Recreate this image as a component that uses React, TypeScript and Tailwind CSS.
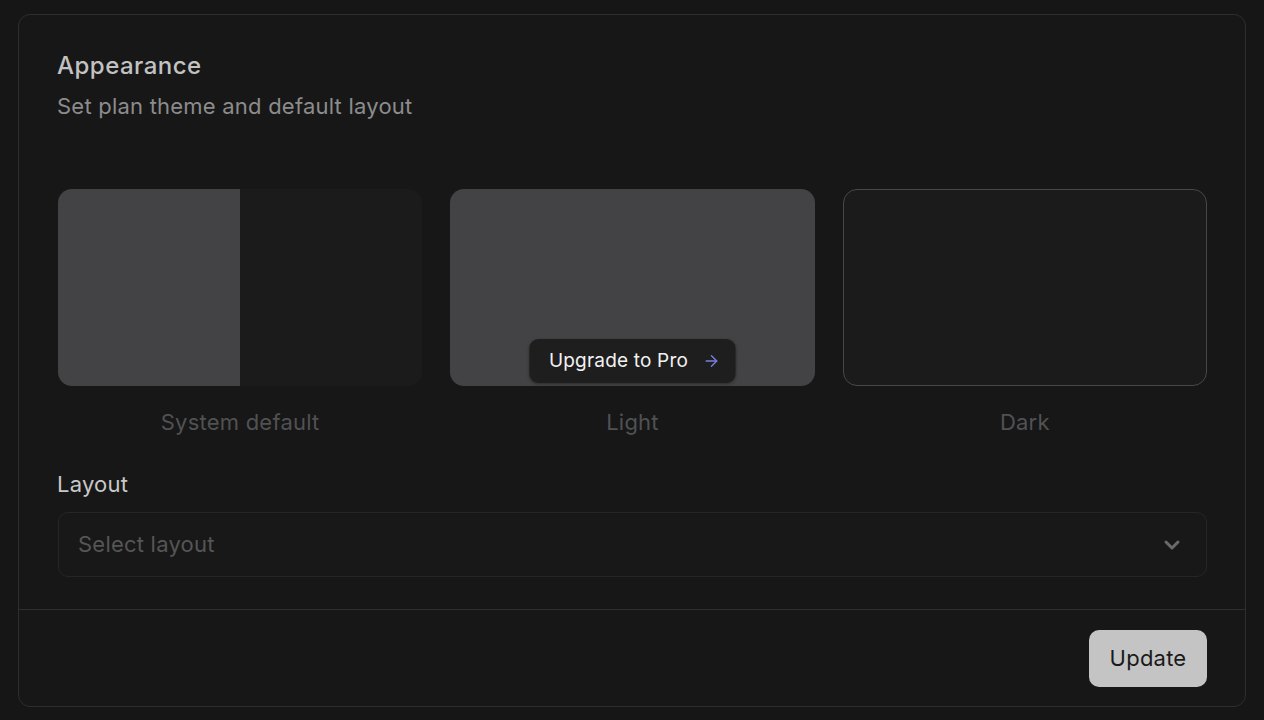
import { ArrowRight, ChevronDown } from 'lucide-react';

const themes = [
  { key: 'system', label: 'System default' },
  { key: 'light', label: 'Light' },
  { key: 'dark', label: 'Dark' },
];

function ThemePreview({ kind }: { kind: string }) {
  if (kind === 'system') {
    return (
      <div className="flex h-[197px] overflow-hidden rounded-[14px]">
        <div className="w-1/2 bg-[#434345]" />
        <div className="w-1/2 bg-[#1b1b1b]" />
      </div>
    );
  }
  if (kind === 'light') {
    return (
      <div className="relative h-[197px] rounded-[14px] bg-[#434345]">
        <button className="absolute bottom-[3px] left-1/2 flex h-[44px] -translate-x-1/2 items-center gap-[14px] whitespace-nowrap rounded-[9px] bg-[#1e1e1e] pl-[19px] pr-[15px] text-[19px] tracking-[0.01em] text-[#f2f2f2] shadow-[0_1px_3px_rgba(0,0,0,0.35)]">
          Upgrade to Pro
          <ArrowRight size={18} strokeWidth={1.8} className="text-[#7a80e0]" />
        </button>
      </div>
    );
  }
  return <div className="h-[197px] rounded-[14px] border border-[#474747] bg-[#1b1b1b]" />;
}

export default function App() {
  return (
    <div
      className="min-h-[720px] bg-[#161616] px-[18px] pt-[14px] pb-[14px]"
      style={{ fontFamily: 'Inter, "Noto Sans", sans-serif' }}
    >
      <div className="rounded-[12px] border border-[#2e2e2e] bg-[#171717]">
        <div className="px-[38px] pt-[35px] pb-[32px]">
          <h2 className="text-[24px] leading-[32px] font-medium tracking-[0.02em] text-[#c2c2c2]">
            Appearance
          </h2>
          <p className="mt-[9px] text-[22px] leading-[30px] tracking-[0.01em] text-[#8c8c8c]">
            Set plan theme and default layout
          </p>

          {/* Theme options */}
          <div className="mt-[68px] grid grid-cols-3 gap-[28px] pl-[1px]">
            {themes.map((t) => (
              <div key={t.key}>
                <ThemePreview kind={t.key} />
                <div className="mt-[21px] text-center text-[22px] leading-[30px] tracking-[0.01em] text-[#515154]">
                  {t.label}
                </div>
              </div>
            ))}
          </div>

          <label className="mt-[32px] block text-[22px] leading-[30px] tracking-[0.01em] text-[#c8c8c8]">
            Layout
          </label>
          <div className="mt-[13px] ml-[1px] flex h-[65px] items-center justify-between rounded-[10px] border border-[#262626] bg-[#181818] pl-[19px] pr-[22px]">
            <span className="text-[22px] tracking-[0.01em] text-[#555557]">Select layout</span>
            <ChevronDown size={24} strokeWidth={3} className="text-[#6a6a6a]" />
          </div>
        </div>

        {/* Footer */}
        <div className="flex justify-end border-t border-[#2e2e2e] px-[38px] pt-[20px] pb-[19px]">
          <button className="flex h-[57px] w-[118px] items-center justify-center rounded-[10px] bg-[#c4c4c4] text-[22px] tracking-[0.01em] text-[#1a1a1a]">
            Update
          </button>
        </div>
      </div>
    </div>
  );
}
